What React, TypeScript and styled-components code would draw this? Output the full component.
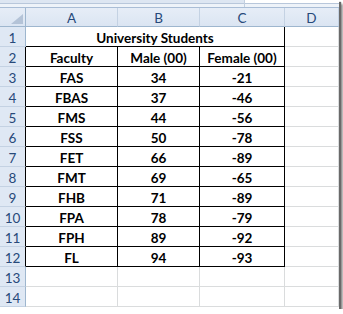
import React from "react";
import styled, { createGlobalStyle, css } from "styled-components";

const GlobalStyle = createGlobalStyle`
  html, body {
    margin: 0;
    padding: 0;
    background: #ffffff;
  }
`;

const Window = styled.div`
  width: 339px;
  height: 309px;
  background: #ffffff;
  box-shadow: 2px 2px 1px #6a6a6a, 4px 4px 2px #9a9a9a;
  overflow: hidden;
  font-family: Lato, "Liberation Sans", sans-serif;
`;

const FormulaStrip = styled.div`
  display: flex;
  box-sizing: border-box;
  height: 8px;
  border-bottom: 1px solid #a9bdd6;
`;

const StripLeft = styled.div`
  width: 244px;
  border-right: 1px solid #c2cfdf;
  background: linear-gradient(#dde6f2 0 3px, #b8c7db 3px 4px, #eef3f9 4px);
`;

const StripRight = styled.div`
  flex: 1;
  background: linear-gradient(#ffffff 0 3px, #b8c7db 3px 4px, #eef3f9 4px);
`;

const Sheet = styled.div`
  display: grid;
  grid-template-columns: 26px 92px 82px 85px 54px;
  grid-auto-rows: 20px;
  grid-template-rows: 19px;
`;

const HeadCell = styled.div<{ $corner?: boolean }>`
  box-sizing: border-box;
  display: flex;
  align-items: center;
  justify-content: center;
  background: linear-gradient(#e6edf7, #dbe5f2);
  border-right: 1px solid #c4d2e3;
  border-bottom: 1px solid #9eb6ce;
  color: #27497a;
  font-size: 13.5px;
  padding-top: 2px;
  position: relative;
  ${({ $corner }) =>
    $corner &&
    css`
      border-right-color: #9eb6ce;
    `}
`;

const CornerMark = styled.span`
  position: absolute;
  right: 2px;
  bottom: 2px;
  width: 0;
  height: 0;
  border-left: 12px solid transparent;
  border-bottom: 10px solid #b4c3d7;
`;

const RowNum = styled.div<{ $edge?: boolean }>`
  box-sizing: border-box;
  display: flex;
  align-items: center;
  justify-content: center;
  background: #dfe8f4;
  border-right: 1px solid ${({ $edge }) => ($edge ? "#000000" : "#9eb6ce")};
  border-bottom: 1px solid #c4d2e3;
  color: #27497a;
  font-size: 13.5px;
  padding-top: 2px;
`;

const Cell = styled.div<{ $right?: boolean; $bottom?: boolean; $span?: number }>`
  box-sizing: border-box;
  display: flex;
  align-items: center;
  justify-content: center;
  border-right: 1px solid ${({ $right }) => ($right ? "#000000" : "#dadcdd")};
  border-bottom: 1px solid ${({ $bottom }) => ($bottom ? "#000000" : "#dadcdd")};
  color: #000000;
  font-weight: 700;
  font-size: 13.5px;
  padding-top: 2px;
  white-space: nowrap;
  ${({ $span }) =>
    $span &&
    css`
      grid-column: span ${$span};
    `}
`;

const rows: [string, string, string][] = [
  ["FAS", "34", "-21"],
  ["FBAS", "37", "-46"],
  ["FMS", "44", "-56"],
  ["FSS", "50", "-78"],
  ["FET", "66", "-89"],
  ["FMT", "69", "-65"],
  ["FHB", "71", "-89"],
  ["FPA", "78", "-79"],
  ["FPH", "89", "-92"],
  ["FL", "94", "-93"],
];

export default function App() {
  return (
    <>
      <GlobalStyle />
      <Window>
        <FormulaStrip>
          <StripLeft />
          <StripRight />
        </FormulaStrip>
        <Sheet>
          <HeadCell $corner>
            <CornerMark />
          </HeadCell>
          <HeadCell>A</HeadCell>
          <HeadCell>B</HeadCell>
          <HeadCell>C</HeadCell>
          <HeadCell>D</HeadCell>

          <RowNum>1</RowNum>
          <Cell $span={3} $right $bottom>
            University Students
          </Cell>
          <Cell />

          <RowNum $edge>2</RowNum>
          <Cell $right $bottom>Faculty</Cell>
          <Cell $right $bottom>Male (00)</Cell>
          <Cell $right $bottom>Female (00)</Cell>
          <Cell />

          {rows.map(([faculty, male, female], i) => (
            <React.Fragment key={faculty}>
              <RowNum $edge>{i + 3}</RowNum>
              <Cell $right $bottom>{faculty}</Cell>
              <Cell $right $bottom>{male}</Cell>
              <Cell $right $bottom>{female}</Cell>
              <Cell />
            </React.Fragment>
          ))}

          {[13, 14].map((n) => (
            <React.Fragment key={n}>
              <RowNum>{n}</RowNum>
              <Cell />
              <Cell />
              <Cell />
              <Cell />
            </React.Fragment>
          ))}
        </Sheet>
      </Window>
    </>
  );
}
